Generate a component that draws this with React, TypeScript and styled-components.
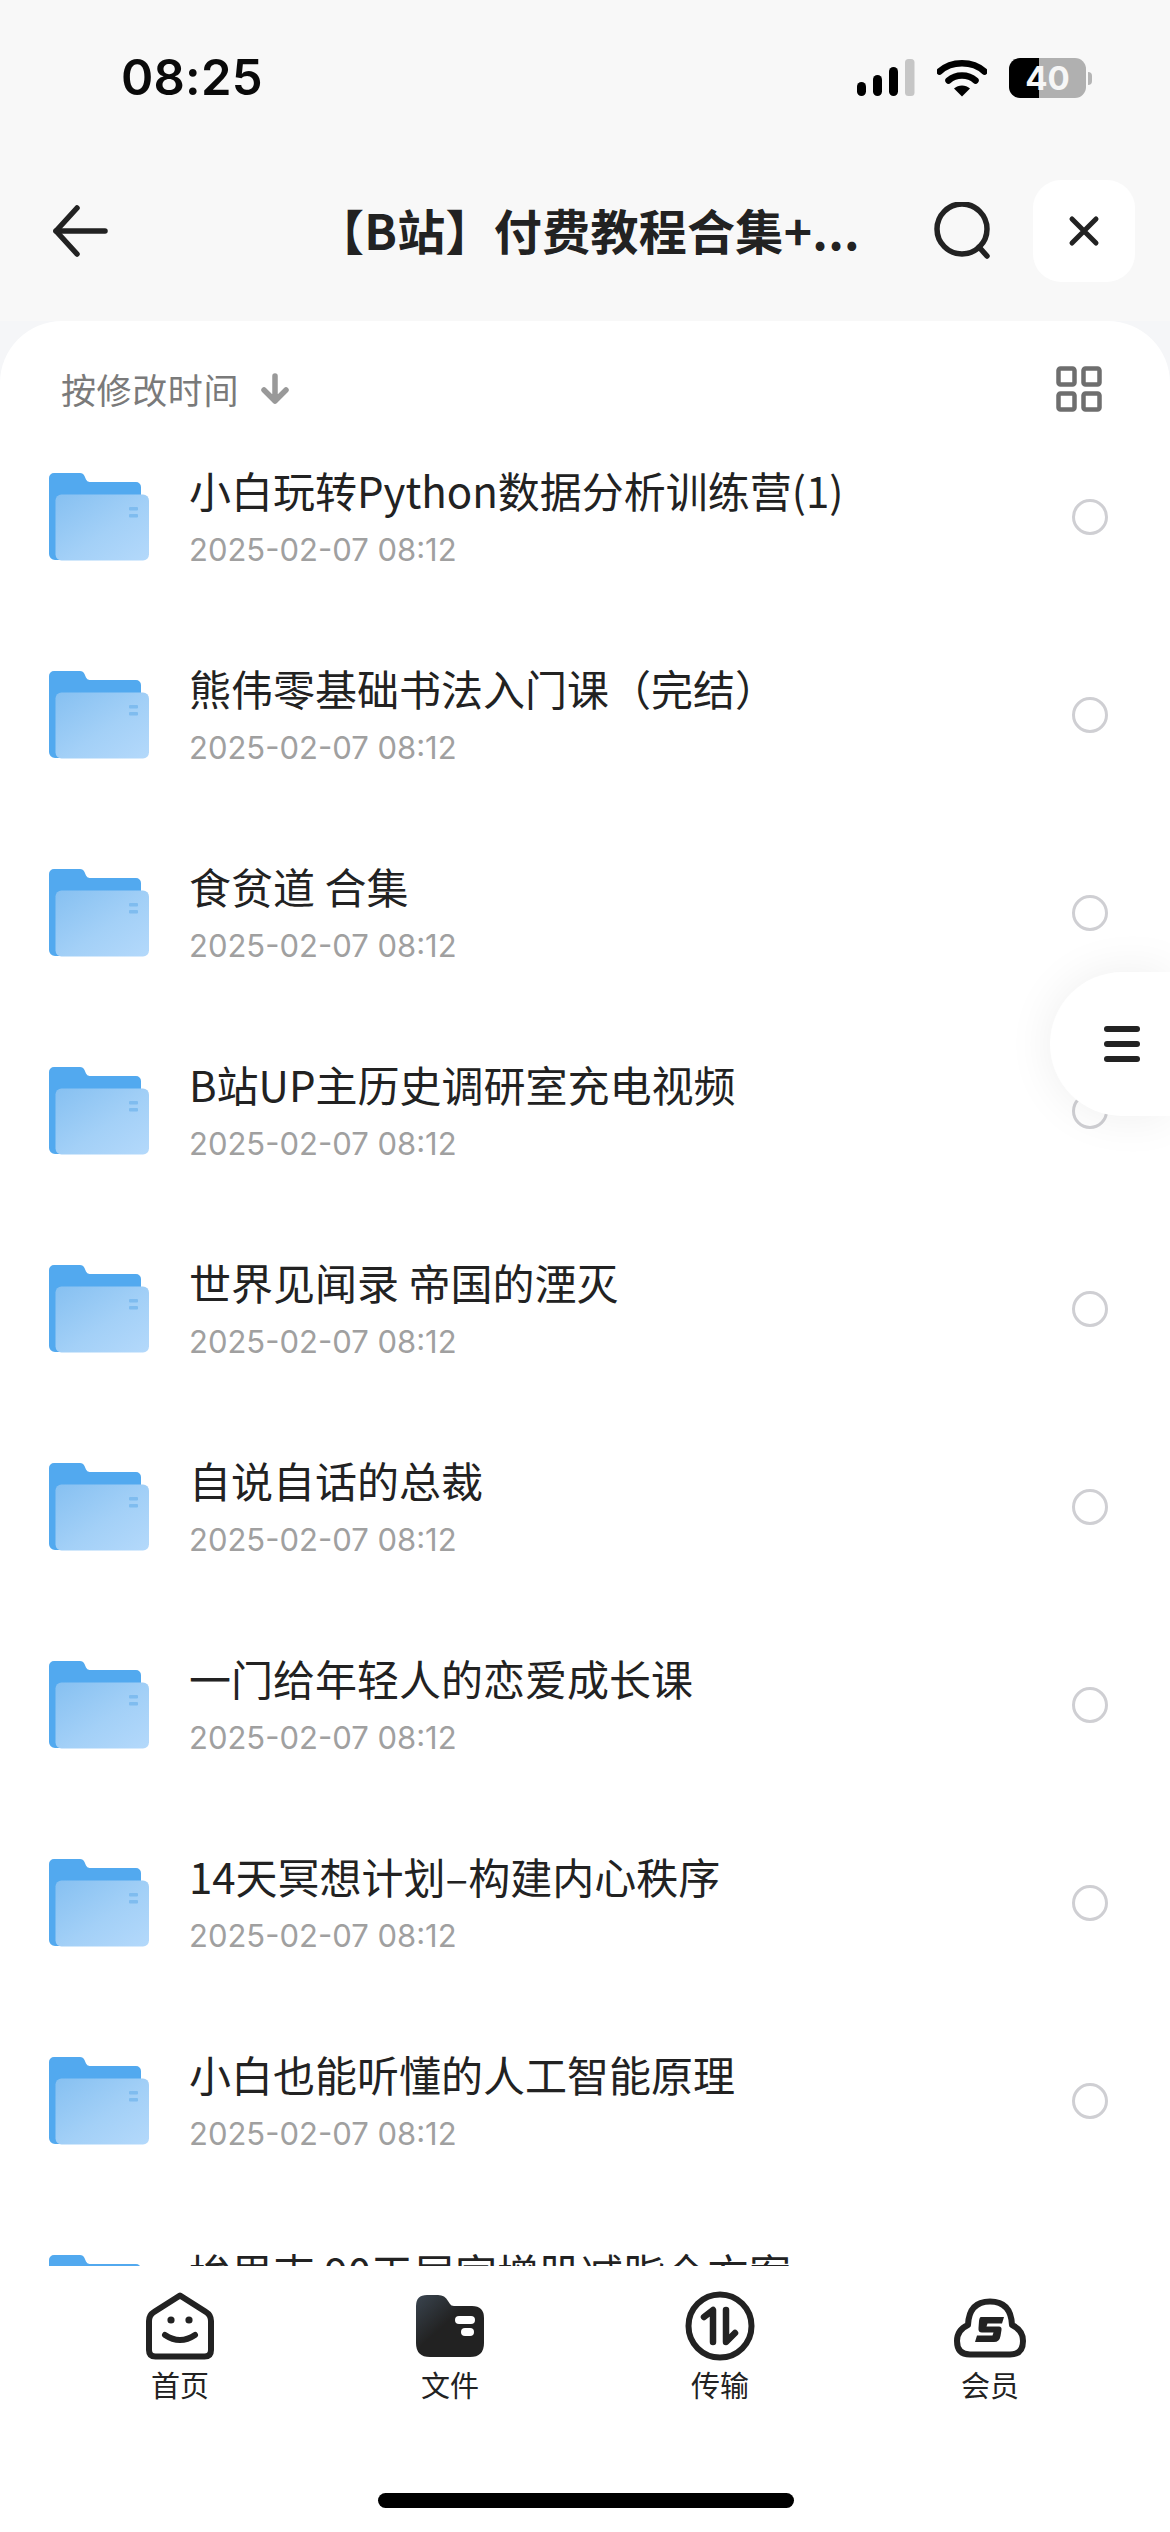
import React from "react";
import styled, { createGlobalStyle } from "styled-components";

const Global = createGlobalStyle`
  html, body { margin: 0; padding: 0; background: #fff; }
  * { box-sizing: border-box; }
  #root { width: 1170px; height: 2532px; }
`;

const FONT = `"Noto Sans CJK SC", "Inter", "Liberation Sans", sans-serif`;

const Screen = styled.div`
  position: relative;
  width: 1170px;
  height: 2532px;
  overflow: hidden;
  display: flex;
  flex-direction: column;
  background: #f8f8f8;
  font-family: ${FONT};
`;

const StatusBar = styled.div`
  height: 180px;
  flex: none;
  display: flex;
  align-items: flex-start;
  justify-content: space-between;
  padding: 50px 0 0 121px;
`;

const Clock = styled.div`
  font-family: "Inter", "Liberation Sans", sans-serif;
  font-size: 49px;
  line-height: 56px;
  font-weight: 600;
  color: #0a0a0a;
  letter-spacing: 0.2px;
`;

const StatusIcons = styled.div`
  display: flex;
  align-items: center;
  gap: 22px;
  margin: 8px 0 0 0;
  padding-right: 84px;
`;

const Battery = styled.div`
  position: relative;
  width: 77px;
  height: 40px;
  border-radius: 11px;
  background: linear-gradient(90deg, #000 0 30px, #b0b0b0 30px 100%);
  color: #f6f6f6;
  font-family: "Inter", "Liberation Sans", sans-serif;
  font-weight: 700;
  font-size: 33px;
  line-height: 40px;
  text-align: center;
  &::after {
    content: "";
    position: absolute;
    right: -6px;
    top: 14px;
    width: 4px;
    height: 13px;
    border-radius: 0 6px 6px 0;
    background: #b5b5b5;
  }
`;

const Header = styled.header`
  height: 141px;
  flex: none;
  display: flex;
  align-items: flex-start;
  padding: 0 36px 0 52px;
`;

const BackButton = styled.div`
  width: 58px;
  height: 102px;
  display: flex;
  align-items: center;
  flex: none;
`;

const Title = styled.h1`
  margin: 0;
  width: 780px;
  flex: none;
  height: 102px;
  line-height: 98px;
  font-size: 48px;
  font-weight: 600;
  color: #222;
  text-align: center;
  white-space: nowrap;
  padding-left: 176px;
  letter-spacing: 0.3px;
`;

const SearchButton = styled.div`
  width: 62px;
  height: 102px;
  display: flex;
  align-items: center;
  flex: none;
  margin-left: 43px;
`;

const CloseButton = styled.div`
  width: 102px;
  height: 102px;
  border-radius: 28px;
  background: #fff;
  margin-left: 38px;
  display: flex;
  align-items: center;
  justify-content: center;
  flex: none;
`;

const SheetBackdrop = styled.div`
  flex: 1;
  min-height: 0;
  background: #f5f6f8;
  display: flex;
  flex-direction: column;
`;

const Sheet = styled.main`
  flex: 1;
  min-height: 0;
  background: #fff;
  border-radius: 62px 62px 0 0;
  display: flex;
  flex-direction: column;
  overflow: hidden;
`;

const SortBar = styled.div`
  height: 132px;
  flex: none;
  display: flex;
  align-items: flex-start;
  padding: 42px 68px 0 61px;
`;

const SortLabel = styled.span`
  font-size: 35px;
  line-height: 52px;
  color: #7a7a7a;
  letter-spacing: 0.6px;
`;

const SortArrow = styled.div`
  margin-left: 21px;
  height: 52px;
  display: flex;
  align-items: center;
`;

const GridButton = styled.div`
  margin-left: auto;
  height: 52px;
  display: flex;
  align-items: center;
`;

const List = styled.div`
  height: 1813px;
  flex: none;
  overflow: hidden;
  display: flex;
  flex-direction: column;
`;

const Row = styled.div`
  height: 198px;
  flex: none;
  display: flex;
  align-items: flex-start;
  padding: 20px 0 0 49px;
`;

const FolderSlot = styled.div`
  width: 100px;
  height: 88px;
  flex: none;
`;

const RowText = styled.div`
  margin-left: 40px;
  margin-top: -12px;
  flex: 1;
  min-width: 0;
`;

const RowTitle = styled.div`
  font-size: 42px;
  line-height: 58px;
  color: #222;
  white-space: nowrap;
`;

const RowDate = styled.div`
  margin-top: 6px;
  font-family: "Inter", "Liberation Sans", sans-serif;
  font-size: 31px;
  line-height: 50px;
  color: #a0a0a0;
  white-space: nowrap;
`;

const Radio = styled.div`
  width: 36px;
  height: 36px;
  flex: none;
  border-radius: 50%;
  border: 3px solid #cfcfd3;
  margin: 26px 62px 0 0;
`;

const TabBar = styled.nav`
  flex: none;
  height: 266px;
  background: #fff;
  position: relative;
  display: grid;
  grid-template-columns: repeat(4, 270px);
  justify-content: center;
  padding-top: 24px;
`;

const Tab = styled.div`
  display: flex;
  flex-direction: column;
  align-items: center;
`;

const TabIcon = styled.div`
  height: 72px;
  display: flex;
  align-items: center;
  justify-content: center;
`;

const TabLabel = styled.span`
  margin-top: 2px;
  font-size: 29px;
  line-height: 40px;
  color: #222;
`;

const HomeIndicator = styled.div`
  position: absolute;
  left: 378px;
  top: 227px;
  width: 416px;
  height: 15px;
  border-radius: 8px;
  background: #000;
`;

const FloatButton = styled.div`
  position: absolute;
  right: 0;
  top: 972px;
  width: 120px;
  height: 144px;
  border-radius: 72px 0 0 72px;
  background: #fff;
  box-shadow: 0 0 48px rgba(0, 0, 0, 0.07);
  display: flex;
  flex-direction: column;
  gap: 9px;
  padding: 54px 0 0 54px;
`;

const FloatLine = styled.i`
  display: block;
  width: 36px;
  height: 6px;
  border-radius: 3px;
  background: #222;
`;

const Signal = () => (
  <svg width="58" height="38" viewBox="0 0 58 38">
    <rect x="0" y="23" width="9" height="14" rx="4.5" fill="#000" />
    <rect x="16" y="16" width="9" height="21" rx="4.5" fill="#000" />
    <rect x="32" y="8" width="9" height="29" rx="4.5" fill="#000" />
    <rect x="48" y="0" width="9.5" height="37" rx="3.5" fill="#c6c6c6" />
  </svg>
);

const Wifi = () => (
  <svg width="50" height="38" viewBox="0 0 50 38" fill="none">
    <path d="M2.5 12.5C14.5 1.5 35.5 1.5 47.5 12.5" stroke="#000" strokeWidth="6.5" strokeLinecap="round" />
    <path d="M11.5 21.5C19 14.8 31 14.8 38.500 21.500" stroke="#000" strokeWidth="6.5" strokeLinecap="round" />
    <path d="M25 37.500L17 29.500C21.500 25.500 28.500 25.500 33 29.500Z" fill="#000" />
  </svg>
);

const BackIcon = () => (
  <svg width="56" height="52" viewBox="0 0 56 52" fill="none" stroke="#222" strokeWidth="5.500" strokeLinecap="round" strokeLinejoin="round">
    <path d="M25 3L4 26L25 49" />
    <path d="M4 26H53" />
  </svg>
);

const SearchIcon = () => (
  <svg width="60" height="58" viewBox="0 0 60 58" fill="none" stroke="#222" strokeWidth="5.500" strokeLinecap="round">
    <circle cx="29" cy="27" r="25" />
    <path d="M46 45L54 54" />
  </svg>
);

const CloseIcon = () => (
  <svg width="32" height="32" viewBox="0 0 32 32" fill="none" stroke="#222" strokeWidth="5" strokeLinecap="round">
    <path d="M4 4L28 28M28 4L4 28" />
  </svg>
);

const DownArrow = () => (
  <svg width="30" height="32" viewBox="0 0 30 32" fill="none" stroke="#999" strokeWidth="5.500" strokeLinecap="round" strokeLinejoin="round">
    <path d="M15 3V28M4 17L15 28L26 17" />
  </svg>
);

const GridIcon = () => (
  <svg width="46" height="46" viewBox="0 0 46 46" fill="none" stroke="#6e6e6e" strokeWidth="4.500">
    <rect x="2.500" y="2.500" width="16" height="16" rx="2" />
    <rect x="27.500" y="2.500" width="16" height="16" rx="2" />
    <rect x="2.500" y="27.500" width="16" height="16" rx="2" />
    <rect x="27.500" y="27.500" width="16" height="16" rx="2" />
  </svg>
);

const FolderIcon = ({ id }: { id: string }) => (
  <svg width="100" height="88" viewBox="0 0 100 88" style={{ display: "block" }}>
    <defs>
      <linearGradient id={id} x1="0" y1="0" x2="1" y2="1">
        <stop offset="0" stopColor="#86c0f1" />
        <stop offset="0.55" stopColor="#a3d0f7" />
        <stop offset="1" stopColor="#b4d9fb" />
      </linearGradient>
    </defs>
    <path
      d="M0 5a5 5 0 0 1 5-5h26a5 5 0 0 1 4.500 3l1.500 3.500a4 4 0 0 0 3.500 2.500H87a5 5 0 0 1 5 5V87H6a6 6 0 0 1-6-6Z"
      fill="#52a9ef"
    />
    <rect x="6.500" y="21.500" width="93.500" height="66" rx="6" fill={`url(#${id})`} />
    <rect x="80" y="34" width="9" height="3.500" rx="1" fill="#7fbcef" />
    <rect x="80" y="41" width="9" height="3.500" rx="1" fill="#7fbcef" />
  </svg>
);

const HomeIcon = () => (
  <svg width="68" height="68" viewBox="0 0 68 68" fill="none" stroke="#222" strokeLinecap="round" strokeLinejoin="round">
    <path d="M34 3.500L60 20Q65 23 65 29V58Q65 64.500 58.500 64.500H9.500Q3 64.500 3 58V29Q3 23 8 20Z" strokeWidth="6" />
    <path d="M19 43Q34 53 49 43" strokeWidth="6" />
    <circle cx="25" cy="28" r="3.600" fill="#222" stroke="none" />
    <circle cx="43" cy="28" r="3.600" fill="#222" stroke="none" />
  </svg>
);

const FilesIcon = () => (
  <svg width="68" height="62" viewBox="0 0 68 62">
    <defs>
      <linearGradient id="filesGrad" x1="0" y1="0" x2="0.75" y2="0.75">
        <stop offset="0" stopColor="#3a4550" />
        <stop offset="0.6" stopColor="#222" />
      </linearGradient>
    </defs>
    <path
      d="M0 11Q0 0 11 0H22Q29 0 32 6L34 9Q35 11 38 11H56Q68 11 68 23V48Q68 62 54 62H14Q0 62 0 48Z"
      fill="url(#filesGrad)"
    />
    <rect x="39" y="21" width="20" height="8" rx="4" fill="#fff" />
    <rect x="45" y="33" width="13" height="8" rx="4" fill="#fff" />
  </svg>
);

const TransferIcon = () => (
  <svg width="70" height="70" viewBox="0 0 70 70" fill="none">
    <circle cx="35" cy="35" r="31.500" stroke="#222" strokeWidth="6" />
    <path d="M19 26L28 19V51" stroke="#222" strokeWidth="6.500" strokeLinecap="round" strokeLinejoin="round" />
    <path d="M41 19V51L50 42" stroke="#222" strokeWidth="6.500" strokeLinecap="round" strokeLinejoin="round" />
  </svg>
);

const MemberIcon = () => (
  <svg width="72" height="64" viewBox="0 -4 72 64">
    <path
      d="M20 56.500H16Q3 56.500 3 43Q3 32 14 27Q15 3.500 36 3.500Q57 3.500 58 27Q69 32 69 43Q69 56.500 56 56.500Z"
      fill="none"
      stroke="#222"
      strokeWidth="6"
      strokeLinejoin="round"
    />
    <path d="M27 19H50L48 25.500H33.500L32.500 28.500H45Q48 28.500 47.500 32L46.500 38Q45.500 44 40 44H21L23 37.500H38.500L39.500 34.500H28Q24 34.500 24.500 30L25 23Q25.500 19 27 19Z" fill="#222" />
  </svg>
);

const rows = [
  "小白玩转Python数据分析训练营(1)",
  "熊伟零基础书法入门课（完结）",
  "食贫道 合集",
  "B站UP主历史调研室充电视频",
  "世界见闻录 帝国的湮灭",
  "自说自话的总裁",
  "一门给年轻人的恋爱成长课",
  "14天冥想计划–构建内心秩序",
  "小白也能听懂的人工智能原理",
  "埃里克 90天居家增肌减脂全方案",
];

const tabs: { label: string; icon: React.ReactNode }[] = [
  { label: "首页", icon: <HomeIcon /> },
  { label: "文件", icon: <FilesIcon /> },
  { label: "传输", icon: <TransferIcon /> },
  { label: "会员", icon: <MemberIcon /> },
];

export default function App() {
  return (
    <>
      <Global />
      <Screen>
        <StatusBar>
          <Clock>08:25</Clock>
          <StatusIcons>
            <Signal />
            <Wifi />
            <Battery>40</Battery>
          </StatusIcons>
        </StatusBar>
        <Header>
          <BackButton><BackIcon /></BackButton>
          <Title>【B站】付费教程合集+...</Title>
          <SearchButton><SearchIcon /></SearchButton>
          <CloseButton><CloseIcon /></CloseButton>
        </Header>
        <SheetBackdrop>
          <Sheet>
            <SortBar>
              <SortLabel>按修改时间</SortLabel>
              <SortArrow><DownArrow /></SortArrow>
              <GridButton><GridIcon /></GridButton>
            </SortBar>
            <List>
              {rows.map((title, i) => (
                <Row key={title}>
                  <FolderSlot><FolderIcon id={`folder${i}`} /></FolderSlot>
                  <RowText>
                    <RowTitle>{title}</RowTitle>
                    <RowDate>2025-02-07 08:12</RowDate>
                  </RowText>
                  <Radio />
                </Row>
              ))}
            </List>
            <TabBar>
              {tabs.map((t) => (
                <Tab key={t.label}>
                  <TabIcon>{t.icon}</TabIcon>
                  <TabLabel>{t.label}</TabLabel>
                </Tab>
              ))}
              <HomeIndicator />
            </TabBar>
          </Sheet>
        </SheetBackdrop>
        <FloatButton>
          <FloatLine />
          <FloatLine />
          <FloatLine />
        </FloatButton>
      </Screen>
    </>
  );
}
